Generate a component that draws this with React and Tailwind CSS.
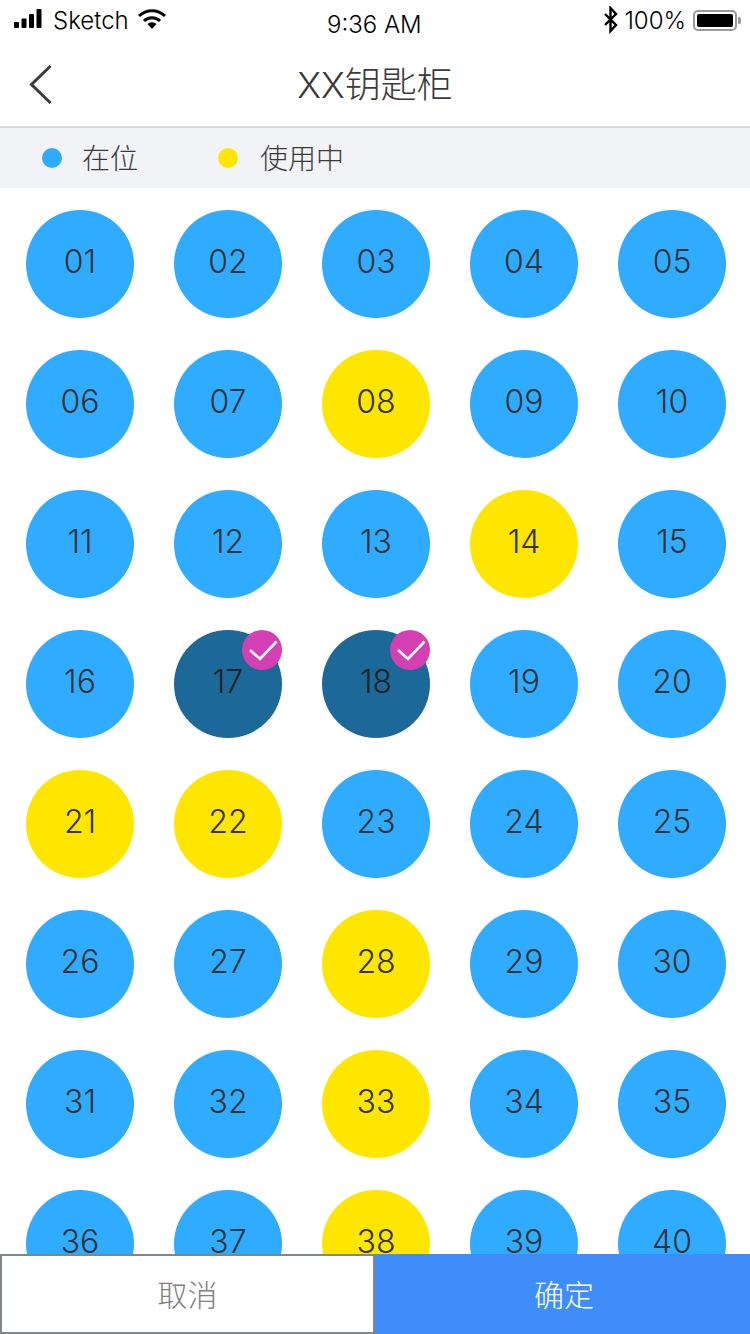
import React from "react";

const FONT = { fontFamily: '"Inter","Noto Sans CJK SC",sans-serif' };
const used = new Set([8, 14, 21, 22, 28, 33, 38]);
const picked = new Set([17, 18]);

function Check() {
  return (
    <div className="absolute top-0 right-0 w-10 h-10 rounded-full bg-[#d43fb4]">
      <svg width="40" height="40" viewBox="0 0 40 40" fill="none">
        <path d="M8 20 L18 29 L34.5 11.5" stroke="#fff" strokeWidth="2.6" />
      </svg>
    </div>
  );
}

function Slot({ n }) {
  const bg = picked.has(n) ? "bg-[#1c6899] text-[#222]" : used.has(n) ? "bg-[#ffe600] text-[#333]" : "bg-[#2fabff] text-[#333]";
  const label = String(n).padStart(2, "0");
  return (
    <div className={`relative w-[108px] h-[108px] rounded-full flex items-center justify-center pb-[5px] text-[32px] font-light ${bg}`}>
      {label}
      {picked.has(n) && <Check />}
    </div>
  );
}

export default function App() {
  return (
    <div className="relative w-[750px] h-[1334px] overflow-hidden bg-white" style={FONT}>
      <div className="h-[44px] relative flex items-center justify-between pl-[14px] pr-[9px] text-black">
        <div className="flex items-center">
          <svg width="30" height="20" viewBox="0 0 30 20" className="mr-[9px] -mt-[6px]">
            <rect x="0" y="13" width="5" height="6" rx="1" fill="#000" />
            <rect x="7.5" y="9.5" width="5" height="9.5" rx="1" fill="#000" />
            <rect x="15" y="5" width="5" height="14" rx="1" fill="#000" />
            <rect x="22.5" y="0" width="5" height="19" rx="1" fill="#000" />
          </svg>
          <span className="text-[24px] font-light -mt-[3px] mr-[9px]" style={{ fontFamily: '"Inter",sans-serif' }}>Sketch</span>
          <svg width="28" height="20" viewBox="0 0 28 20" className="-mt-[7px]">
            <path d="M1 7 A18.5 18.5 0 0 1 27 7" stroke="#000" strokeWidth="3" fill="none" />
            <path d="M6 12 A11.5 11.5 0 0 1 22 12" stroke="#000" strokeWidth="3" fill="none" />
            <path d="M9.5 15 L14 20 L18.5 15 A6.5 6.5 0 0 0 9.5 15 Z" fill="#000" />
          </svg>
        </div>
        <span className="absolute left-[327px] top-[7px] text-[24px] font-light whitespace-nowrap">9:36 AM</span>
        <div className="flex items-center -mt-[3px]">
          <svg width="16" height="28" viewBox="0 0 16 28" className="mr-[5px] -mt-[2px]">
            <path d="M2 8 L13 19 L7.5 25 V2 L13 8 L2 19" stroke="#000" strokeWidth="2.4" fill="none" />
          </svg>
          <span className="text-[24px] font-light mr-[7px]">100%</span>
          <div className="w-[44px] h-[21px] border-[2px] border-[#999] rounded-[5px] p-[2px]">
            <div className="w-full h-full rounded-[2px] bg-black" />
          </div>
          <div className="w-[3px] h-[7px] bg-[#999] rounded-r-[2px] ml-[1px]" />
        </div>
      </div>

      <div className="h-[84px] relative flex items-center justify-center border-b-2 border-[#d8d8da]">
        <svg width="24" height="42" viewBox="0 0 24 42" className="absolute left-[29px] top-[20px]" fill="none">
          <path d="M21.5 2 L2.5 20.5 L21.5 39" stroke="#3b3b3b" strokeWidth="3" />
        </svg>
        <span className="text-[36px] font-light text-[#3a3a3a]">XX钥匙柜</span>
      </div>

      <div className="h-[60px] bg-[#f2f3f7] flex items-center text-[28px] font-light text-[#3a3a3a]">
        <div className="w-5 h-5 rounded-full bg-[#2fabff] ml-[42px]" />
        <span className="ml-[20px] mt-[1px]">在位</span>
        <div className="w-5 h-5 rounded-full bg-[#ffe600] ml-[80px]" />
        <span className="ml-[22px] mt-[1px]">使用中</span>
      </div>

      <div className="grid grid-cols-5 gap-x-[40px] gap-y-[32px] pl-[26px] pt-[22px] w-max">
        {Array.from({ length: 40 }, (_, i) => (
          <Slot key={i} n={i + 1} />
        ))}
      </div>

      <div className="absolute left-0 right-0 bottom-0 h-[80px] flex text-[30px] font-light">
        <div className="w-[375px] bg-white border-2 border-[#7d8790] flex items-center justify-center text-[#808080] pt-[2px]">取消</div>
        <div className="flex-1 bg-[#3e8dfb] flex items-center justify-center text-white pt-[2px] pl-[3px]">确定</div>
      </div>
    </div>
  );
}
